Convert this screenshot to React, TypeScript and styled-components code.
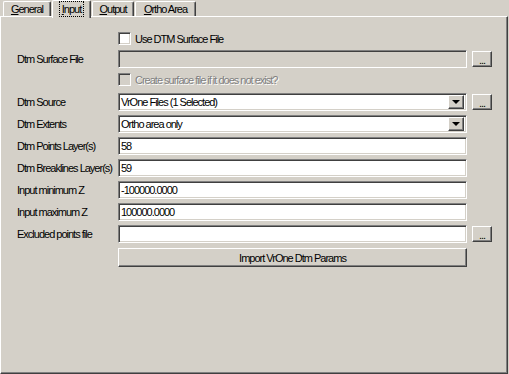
import React from 'react';
import styled, { createGlobalStyle, css } from 'styled-components';

const FACE = '#d4d0c8';
const SHADOW = '#808080';
const DARK = '#404040';
const LIGHT = '#ffffff';

const GlobalStyle = createGlobalStyle`
    html, body {
        margin: 0;
        padding: 0;
        background: ${FACE};
    }

    body {
        font-family: "Liberation Sans", Arial, sans-serif;
        font-size: 11px;
        letter-spacing: -1px;
        color: #000;
    }
`;

const sunken = css`
    border: 1px solid;
    border-color: ${SHADOW} ${LIGHT} ${LIGHT} ${SHADOW};
    box-shadow: inset 1px 1px ${DARK}, inset -1px -1px ${FACE};
`;

const raised = css`
    border: 1px solid;
    border-color: ${LIGHT} ${DARK} ${DARK} ${LIGHT};
    box-shadow: inset -1px -1px ${SHADOW}, inset 1px 1px ${FACE};
`;

const StyledPage = styled.div`
    width: 509px;
    height: 374px;
    overflow: hidden;
    background: ${FACE};
`;

const StyledTabStrip = styled.div`
    display: flex;
    align-items: flex-end;
    gap: 1px;
    height: 16px;
    padding-left: 3px;
    position: relative;
    z-index: 1;
`;

const StyledTab = styled.div<{ $active?: boolean; $width: number }>`
    box-sizing: border-box;
    width: ${({ $width }) => $width}px;
    height: ${({ $active }) => ($active ? 18 : 15)}px;
    margin-bottom: ${({ $active }) => ($active ? -2 : 0)}px;
    padding-bottom: ${({ $active }) => ($active ? 2 : 0)}px;
    border-top: 1px solid ${LIGHT};
    border-left: 1px solid ${LIGHT};
    border-right: 1px solid ${DARK};
    border-radius: 2px 2px 0 0;
    box-shadow: inset -1px 0 ${SHADOW};
    background: ${FACE};
    display: flex;
    align-items: center;
    justify-content: center;
    white-space: nowrap;
`;

const StyledFocus = styled.span`
    outline: 1px dotted #000;
    outline-offset: 1px;
    padding: 0 1px;
    line-height: 12px;
`;

const StyledPanel = styled.div`
    box-sizing: border-box;
    width: 508px;
    height: 358px;
    border: 1px solid;
    border-color: ${LIGHT} ${DARK} ${DARK} ${LIGHT};
    box-shadow: inset -1px -1px ${SHADOW};
    padding: 15px 0 0 16px;
    display: flex;
    flex-direction: column;
`;

const StyledRow = styled.div<{ $height: number; $top: number }>`
    display: flex;
    align-items: center;
    height: ${({ $height }) => $height}px;
    margin-top: ${({ $top }) => $top}px;
`;

const StyledLabel = styled.div`
    flex: none;
    width: 101px;
    white-space: nowrap;
`;

const StyledInput = styled.input<{ $disabled?: boolean }>`
    ${sunken};
    box-sizing: border-box;
    width: 349px;
    height: 18px;
    margin: 0;
    padding: 0 0 0 2px;
    font: inherit;
    letter-spacing: inherit;
    color: #000;
    background: ${({ $disabled }) => ($disabled ? FACE : '#fff')};
    outline: none;
`;

const StyledCombo = styled.div`
    ${sunken};
    box-sizing: border-box;
    width: 349px;
    height: 18px;
    padding: 2px 2px 2px 2px;
    background: #fff;
    display: flex;
    align-items: center;
`;

const StyledComboText = styled.div`
    flex: 1;
    white-space: nowrap;
`;

const StyledDropButton = styled.div`
    ${raised};
    box-sizing: border-box;
    width: 16px;
    height: 14px;
    background: ${FACE};
    display: flex;
    align-items: center;
    justify-content: center;

    &::after {
        content: '';
        border-left: 4px solid transparent;
        border-right: 4px solid transparent;
        border-top: 4px solid #000;
        margin-left: -1px;
    }
`;

const StyledSideButton = styled.div`
    ${raised};
    box-sizing: border-box;
    flex: none;
    width: 20px;
    height: 16px;
    margin-left: 5px;
    background: ${FACE};
    display: flex;
    align-items: center;
    justify-content: center;
    line-height: 1;
    padding-top: 2px;
`;

const StyledCheckbox = styled.div<{ $disabled?: boolean }>`
    ${sunken};
    box-sizing: border-box;
    flex: none;
    width: 13px;
    height: 13px;
    background: ${({ $disabled }) => ($disabled ? FACE : '#fff')};
`;

const StyledCheckText = styled.span<{ $disabled?: boolean }>`
    margin-left: 4px;
    white-space: nowrap;
    color: ${({ $disabled }) => ($disabled ? SHADOW : '#000')};
    text-shadow: ${({ $disabled }) => ($disabled ? `1px 1px ${LIGHT}` : 'none')};
`;

const StyledWideButton = styled.div`
    ${raised};
    box-sizing: border-box;
    width: 349px;
    height: 19px;
    margin-left: 101px;
    background: ${FACE};
    display: flex;
    align-items: center;
    justify-content: center;
`;

const tabs = [
    { key: 'G', rest: 'eneral', width: 48 },
    { key: 'I', rest: 'nput', width: 39, active: true },
    { key: 'O', rest: 'utput', width: 42 },
    { key: 'O', rest: 'rtho Area', width: 61 },
];

const fields = [
    { label: 'Dtm Points Layer(s)', value: '58' },
    { label: 'Dtm Breaklines Layer(s)', value: '59' },
    { label: 'Input minimum Z', value: '-100000.0000' },
    { label: 'Input maximum Z', value: '100000.0000' },
];

const CheckRow = ({ text, disabled, top }: { text: string; disabled?: boolean; top: number }) => (
    <StyledRow $height={13} $top={top}>
        <StyledLabel />
        <StyledCheckbox $disabled={disabled} />
        <StyledCheckText $disabled={disabled}>{text}</StyledCheckText>
    </StyledRow>
);

const Combo = ({ value }: { value: string }) => (
    <StyledCombo>
        <StyledComboText>{value}</StyledComboText>
        <StyledDropButton />
    </StyledCombo>
);

export default function App() {
    return (
        <StyledPage>
            <GlobalStyle />
            <StyledTabStrip>
                {tabs.map((tab) => {
                    const label = (
                        <>
                            <u>{tab.key}</u>
                            {tab.rest}
                        </>
                    );
                    return (
                        <StyledTab key={tab.key + tab.rest} $active={tab.active} $width={tab.width}>
                            {tab.active ? <StyledFocus>{label}</StyledFocus> : label}
                        </StyledTab>
                    );
                })}
            </StyledTabStrip>
            <StyledPanel>
                <CheckRow text="Use DTM Surface File" top={0} />
                <StyledRow $height={18} $top={5}>
                    <StyledLabel>Dtm Surface File</StyledLabel>
                    <StyledInput readOnly value="" $disabled />
                    <StyledSideButton>...</StyledSideButton>
                </StyledRow>
                <CheckRow text="Create surface file if it does not exist?" disabled top={5} />
                <StyledRow $height={18} $top={7}>
                    <StyledLabel>Dtm Source</StyledLabel>
                    <Combo value="VrOne Files (1 Selected)" />
                    <StyledSideButton>...</StyledSideButton>
                </StyledRow>
                <StyledRow $height={18} $top={4}>
                    <StyledLabel>Dtm Extents</StyledLabel>
                    <Combo value="Ortho area only" />
                </StyledRow>
                {fields.map((field) => (
                    <StyledRow key={field.label} $height={18} $top={4}>
                        <StyledLabel>{field.label}</StyledLabel>
                        <StyledInput readOnly value={field.value} />
                    </StyledRow>
                ))}
                <StyledRow $height={18} $top={4}>
                    <StyledLabel>Excluded points file</StyledLabel>
                    <StyledInput readOnly value="" />
                    <StyledSideButton>...</StyledSideButton>
                </StyledRow>
                <StyledRow $height={19} $top={5}>
                    <StyledWideButton>Import VrOne Dtm Params</StyledWideButton>
                </StyledRow>
            </StyledPanel>
        </StyledPage>
    );
}
